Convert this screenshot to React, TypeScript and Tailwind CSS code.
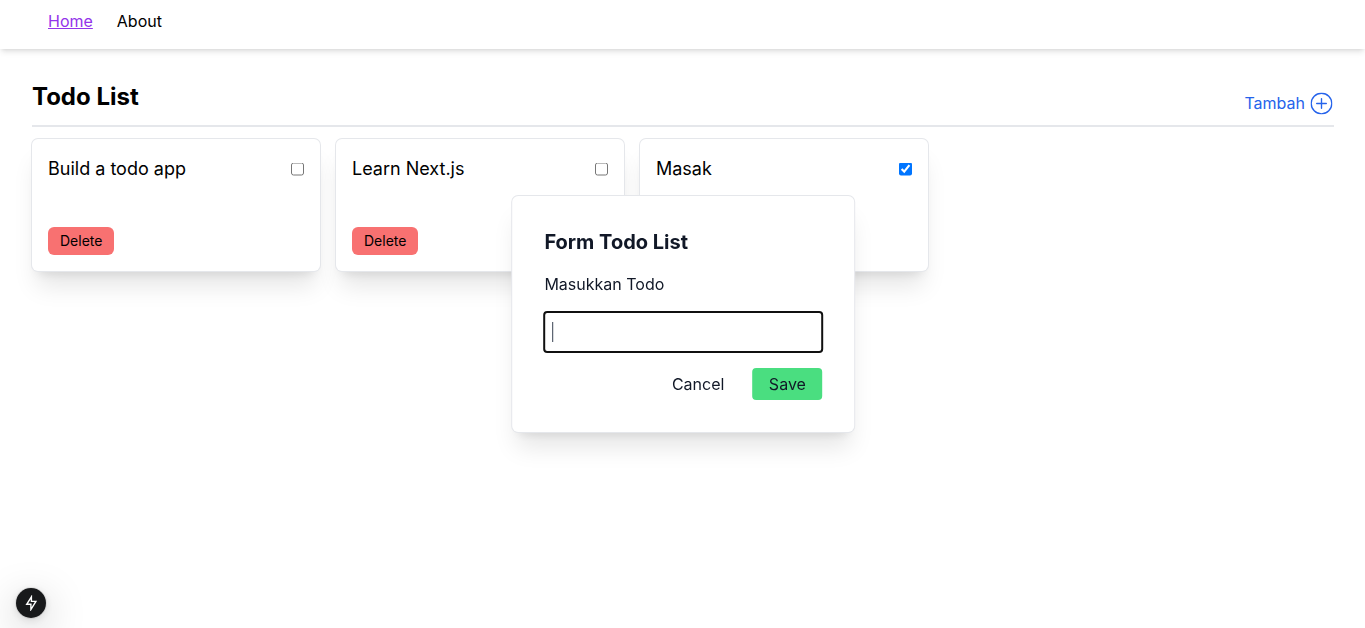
import { BsPlusCircle } from "react-icons/bs";

type Todo = { title: string; done: boolean };

const todos: Todo[] = [
  { title: "Build a todo app", done: false },
  { title: "Learn Next.js", done: false },
  { title: "Masak", done: true },
];

function TodoCard({ title, done }: Todo) {
  return (
    <article className="flex h-[132px] w-72 flex-col justify-between rounded-md bg-white p-4 shadow-[0_20px_25px_-5px_rgba(0,0,0,0.1),0_8px_10px_-6px_rgba(0,0,0,0.1)] ring-1 ring-[#e5e7eb]">
      <div className="flex items-center justify-between">
        <h2 className="text-lg">{title}</h2>
        <input type="checkbox" defaultChecked={done} className="size-[13px] translate-y-[-0.5px]" />
      </div>
      {!done && (
        <button className="self-start rounded-md bg-[#f87171] px-3 py-1 text-sm">Delete</button>
      )}
    </article>
  );
}

function TodoDialog() {
  return (
    <div className="fixed inset-0 flex items-center justify-center">
      <div
        role="dialog"
        className="h-[236px] w-[342px] translate-x-[0.2px] rounded-md bg-white p-8 text-[#111827] shadow-[0_20px_25px_-5px_rgba(0,0,0,0.1),0_8px_10px_-6px_rgba(0,0,0,0.1)] ring-1 ring-[#e5e7eb]"
      >
        <h2 className="pl-[0.7px] text-xl font-bold">Form Todo List</h2>
        <p className="mt-4 pl-[0.7px]">Masukkan Todo</p>
        <div className="mx-px mt-[17px] flex h-[38px] items-center rounded-[2px] px-[7px] ring-2 ring-[#101010]">
          <span className="h-5 w-px bg-[#374151]" />
        </div>
        <div className="mt-[17px] flex justify-end gap-3">
          <button className="h-8 pr-[15.3px] pl-4">Cancel</button>
          <button className="h-8 w-[70px] rounded bg-[#4ade80] pl-[1.4px]">Save</button>
        </div>
      </div>
    </div>
  );
}

export default function App() {
  return (
    <div className="min-h-screen bg-white font-['Inter',sans-serif] text-black">
      <nav className="flex h-[49px] gap-6 px-12 pt-[9px] shadow-[0_4px_6px_-1px_rgba(0,0,0,0.1),0_2px_4px_-2px_rgba(0,0,0,0.1)]">
        <a className="h-6 text-[#9333ea] underline">Home</a>
        <a className="h-6">About</a>
      </nav>
      <main className="pt-8 pr-[31px] pl-8">
        <header className="flex h-[46px] items-start justify-between border-b-2 border-[#e5e7eb]">
          <h1 className="text-2xl font-bold">Todo List</h1>
          <button className="mt-[10px] mr-[1.5px] flex items-center gap-[5.5px] text-[#2563eb]">
            Tambah
            <BsPlusCircle size={22} className="translate-x-[-0.5px] translate-y-[0.5px]" />
          </button>
        </header>
        <section className="mt-3 flex gap-4">
          {todos.map((todo) => (
            <TodoCard key={todo.title} {...todo} />
          ))}
        </section>
      </main>
      <TodoDialog />
      <div className="fixed bottom-[10px] left-4 flex size-[30px] items-center justify-center rounded-full bg-[#18191b] shadow-[0_0_0_1px_rgba(0,0,0,0.08),0_11px_40px_rgba(0,0,0,0.25),0_2px_10px_rgba(0,0,0,0.12)]">
        <svg width="16" height="16" viewBox="0 0 16 16" fill="none" stroke="white" strokeWidth="1.4">
          <path d="M8.4 1.8 3.7 9.3h4.2v5.2l5-8.1H8.4z" />
        </svg>
      </div>
    </div>
  );
}
